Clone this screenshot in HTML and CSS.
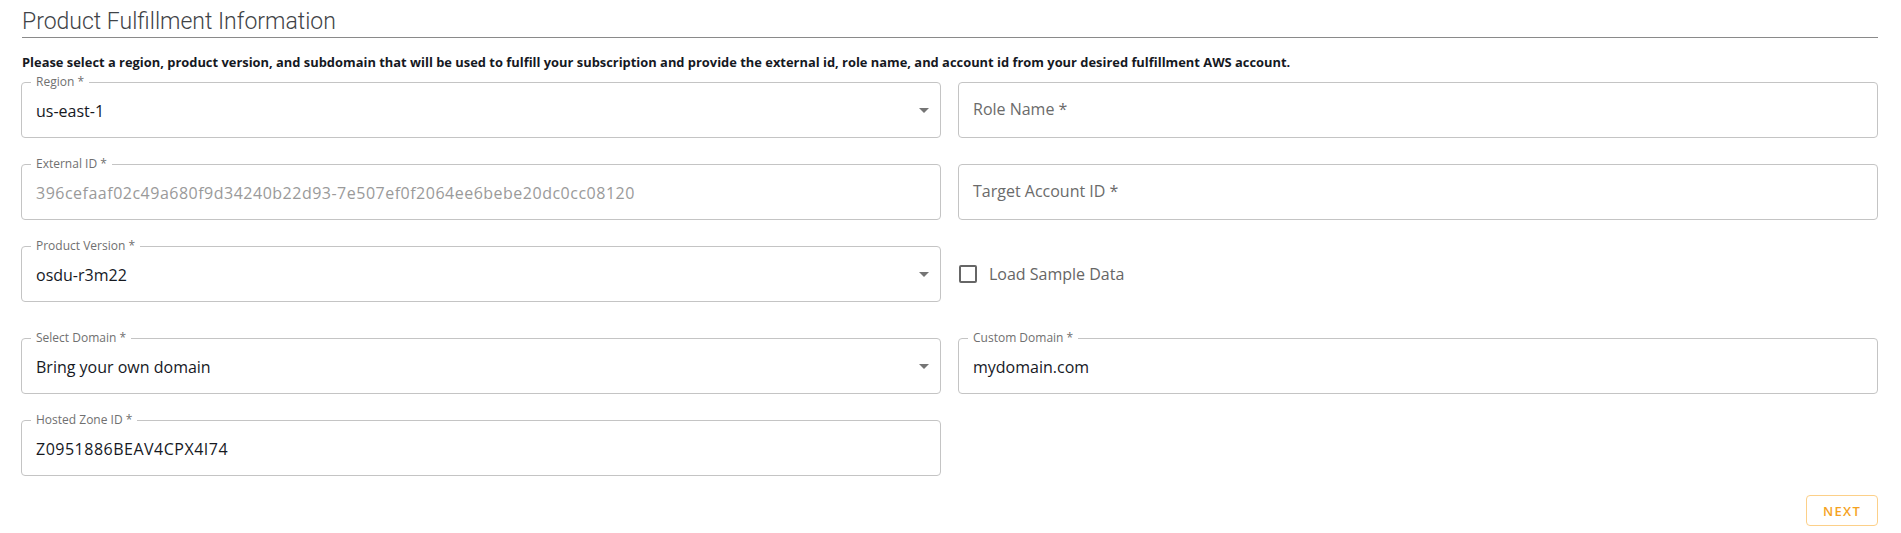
FILE: index.html
```html
<!DOCTYPE html>
<html lang="en">
<head>
<meta charset="utf-8">
<title>Product Fulfillment Information</title>
<link rel="stylesheet" href="styles.css">
</head>
<body>
<main class="page">
  <h1 class="title">Product Fulfillment Information</h1>
  <p class="intro">Please select a region, product version, and subdomain that will be used to fulfill your subscription and provide the external id, role name, and account id from your desired fulfillment AWS account.</p>

  <form class="form">
    <div class="row">
      <fieldset class="field">
        <legend>Region *</legend>
        <div class="control"><span class="value">us-east-1</span><span class="caret"></span></div>
      </fieldset>
      <div class="plain-wrap">
        <div class="box"><span class="placeholder">Role Name *</span></div>
      </div>
    </div>

    <div class="row">
      <fieldset class="field">
        <legend>External ID *</legend>
        <div class="control"><span class="value disabled id">396cefaaf02c49a680f9d34240b22d93-7e507ef0f2064ee6bebe20dc0cc08120</span></div>
      </fieldset>
      <div class="plain-wrap">
        <div class="box"><span class="placeholder">Target Account ID *</span></div>
      </div>
    </div>

    <div class="row row-check">
      <fieldset class="field">
        <legend>Product Version *</legend>
        <div class="control"><span class="value">osdu-r3m22</span><span class="caret"></span></div>
      </fieldset>
      <div class="plain-wrap">
        <label class="check"><span class="checkbox"></span><span class="check-label">Load Sample Data</span></label>
      </div>
    </div>

    <div class="row">
      <fieldset class="field">
        <legend>Select Domain *</legend>
        <div class="control"><span class="value">Bring your own domain</span><span class="caret"></span></div>
      </fieldset>
      <fieldset class="field">
        <legend>Custom Domain *</legend>
        <div class="control"><span class="value">mydomain.com</span></div>
      </fieldset>
    </div>

    <div class="row">
      <fieldset class="field">
        <legend>Hosted Zone ID *</legend>
        <div class="control"><span class="value id">Z0951886BEAV4CPX4I74</span></div>
      </fieldset>
      <div></div>
    </div>

    <div class="actions">
      <button type="button" class="next">NEXT</button>
    </div>
  </form>
</main>
</body>
</html>
```

FILE: styles.css
```css
* { box-sizing: border-box; }

html, body {
  margin: 0;
  background: #ffffff;
}

body {
  font-family: "Open Sans", "Noto Sans", Arial, sans-serif;
  color: #16191f;
}

.page {
  padding: 7px 23px 0 21px;
}

.title {
  margin: 0 0 0 1px;
  font-family: Roboto, "Open Sans", sans-serif;
  font-size: 23px;
  font-weight: 300;
  line-height: 30px;
  color: #3f4347;
  border-bottom: 1px solid #8a8a8a;
  height: 31px;
}

.intro {
  margin: 15px 0 0 1px;
  font-size: 12.9px;
  font-weight: 700;
  line-height: 18px;
  color: #16191f;
}

.form {
  margin-top: 4px;
}

.row {
  display: grid;
  grid-template-columns: 1fr 1fr;
  column-gap: 17px;
  margin-top: 19px;
}

.form .row:first-child { margin-top: 0; }

.row-check + .row { margin-top: 29px; }

.field {
  margin: 0;
  padding: 0 14px 0 9px;
  border: 1px solid #c4c4c4;
  border-radius: 4px;
  height: 63px;
  min-width: 0;
}

.field legend {
  padding: 0 5px;
  font-size: 12px;
  line-height: 14px;
  color: #707070;
}

.control {
  display: flex;
  align-items: center;
  justify-content: space-between;
  height: 47px;
  padding: 0 0 4px 5px;
}

.value {
  font-size: 16px;
  line-height: 20px;
  color: #16191f;
  white-space: nowrap;
}

.value.id { letter-spacing: 0.5px; }

.value.disabled { color: #9a9a9a; }

.caret {
  width: 0;
  height: 0;
  border-left: 5px solid transparent;
  border-right: 5px solid transparent;
  border-top: 5px solid #757575;
  margin-right: -3px;
}

.plain-wrap {
  padding-top: 7px;
}

.box {
  height: 56px;
  border: 1px solid #c4c4c4;
  border-radius: 4px;
  display: flex;
  align-items: center;
  padding: 0 14px 2px 14px;
}

.placeholder {
  font-size: 16px;
  line-height: 20px;
  color: #6b6b6b;
}

.check {
  display: flex;
  align-items: center;
  height: 56px;
  padding-left: 1px;
}

.checkbox {
  width: 18px;
  height: 18px;
  border: 2px solid #666666;
  border-radius: 2px;
  margin-right: 12px;
}

.check-label {
  font-size: 16px;
  line-height: 20px;
  color: #666666;
}

.actions {
  display: flex;
  justify-content: flex-end;
  margin-top: 19px;
}

.next {
  width: 72px;
  height: 31px;
  background: #ffffff;
  border: 1px solid #fcd089;
  border-radius: 4px;
  color: #f5a31f;
  font-family: inherit;
  font-size: 13px;
  font-weight: 600;
  letter-spacing: 1.3px;
  cursor: pointer;
}
```
